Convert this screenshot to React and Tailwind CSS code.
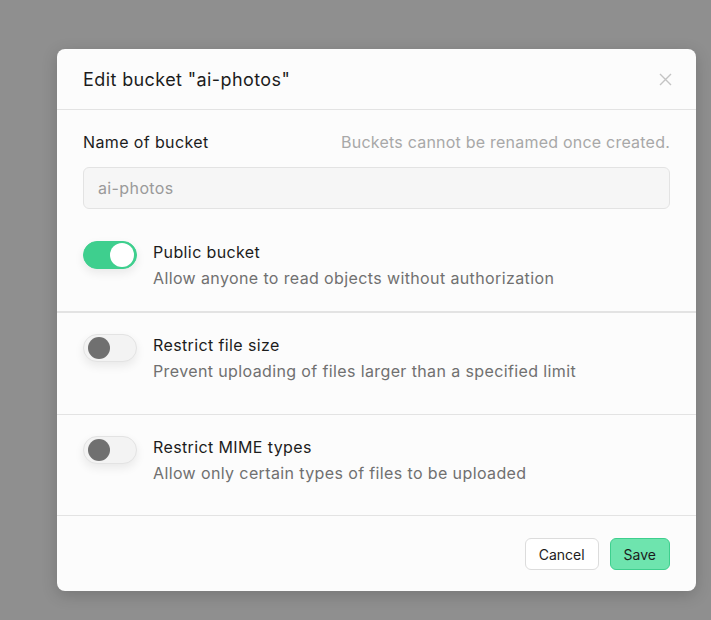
import { useState } from "react";

function Toggle({ on, onChange }) {
  return (
    <button
      type="button"
      onClick={onChange}
      className={`relative mt-[1px] h-[28px] w-[54px] shrink-0 rounded-full border shadow-[0_4px_10px_rgba(0,0,0,0.08)] ${
        on ? "border-[#3ecf8e] bg-[#3ecf8e]" : "border-[#e3e3e3] bg-[#f3f3f3]"
      }`}
    >
      <span
        className={`absolute top-1/2 -translate-y-1/2 rounded-full ${
          on
            ? "right-[2px] h-[24px] w-[24px] bg-white"
            : "left-[4px] h-[22px] w-[22px] bg-[#707070]"
        }`}
      />
    </button>
  );
}

function OptionRow({ title, desc, on, onChange }) {
  return (
    <div className="flex gap-4">
      <Toggle on={on} onChange={onChange} />
      <div className="flex flex-col tracking-[0.38px]">
        <span className="text-[16px] leading-[24px] text-[#1c1c1c]">{title}</span>
        <span className="mt-[2px] text-[16px] leading-[24px] text-[#707070]">{desc}</span>
      </div>
    </div>
  );
}

export default function App() {
  const [isPublic, setIsPublic] = useState(true);
  const [sizeLimit, setSizeLimit] = useState(false);
  const [mime, setMime] = useState(false);

  return (
    <div
      className="min-h-[620px] bg-[#8f8f8f] pl-[57px] pt-[49px]"
      style={{ fontFamily: "Inter, 'Noto Sans', sans-serif" }}
    >
      <div className="w-[639px] overflow-hidden rounded-[8px] bg-[#fcfcfc] shadow-[0_4px_16px_rgba(0,0,0,0.18)]">
        {/* header */}
        <div className="flex h-[61px] items-center justify-between border-b border-[#e3e3e3] px-[26px]">
          <h2 className="text-[18px] tracking-[0.4px] text-[#1c1c1c]">Edit bucket "ai-photos"</h2>
          <svg width="13" height="13" viewBox="0 0 13 13" className="mr-[-2px]">
            <path d="M1 1L12 12M12 1L1 12" stroke="#c4c4c4" strokeWidth="1.4" />
          </svg>
        </div>

        {/* name + public */}
        <div className="border-b-2 border-[#e3e3e3] px-[26px] pb-[21px] pt-[20px]">
          <div className="flex items-center justify-between">
            <span className="text-[16px] leading-[24px] tracking-[0.38px] text-[#1c1c1c]">Name of bucket</span>
            <span className="text-[16px] leading-[24px] tracking-[0.22px] text-[#a8a8a8]">
              Buckets cannot be renamed once created.
            </span>
          </div>
          <div className="mt-[13px] flex h-[42px] items-center rounded-[6px] border border-[#e3e3e3] bg-[#f6f6f6] px-[14px] text-[16px] tracking-[0.38px] text-[#9a9a9a]">
            ai-photos
          </div>
          <div className="mt-[31px]">
            <OptionRow
              title="Public bucket"
              desc="Allow anyone to read objects without authorization"
              on={isPublic}
              onChange={() => setIsPublic(!isPublic)}
            />
          </div>
        </div>

        <div className="border-b border-[#e3e3e3] px-[26px] pb-[31px] pt-[20px]">
          <OptionRow
            title="Restrict file size"
            desc="Prevent uploading of files larger than a specified limit"
            on={sizeLimit}
            onChange={() => setSizeLimit(!sizeLimit)}
          />
        </div>

        <div className="border-b border-[#e3e3e3] px-[26px] pb-[30px] pt-[20px]">
          <OptionRow
            title="Restrict MIME types"
            desc="Allow only certain types of files to be uploaded"
            on={mime}
            onChange={() => setMime(!mime)}
          />
        </div>

        {/* footer */}
        <div className="flex justify-end gap-[11px] px-[26px] pb-[21px] pt-[22px]">
          <button className="h-[32px] rounded-[6px] border border-[#dcdcdc] bg-white px-[13px] text-[14px] text-[#1c1c1c]">
            Cancel
          </button>
          <button className="h-[32px] rounded-[6px] border border-[#3ecf8e] bg-[#6ee4ae] px-[13px] text-[14px] text-[#1c1c1c]">
            Save
          </button>
        </div>
      </div>
    </div>
  );
}
